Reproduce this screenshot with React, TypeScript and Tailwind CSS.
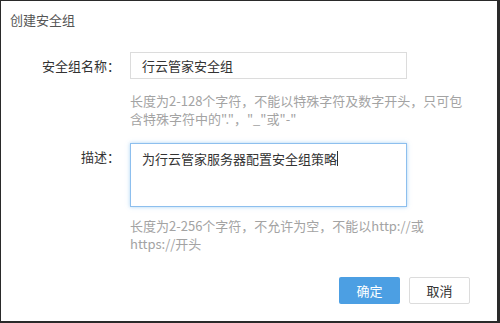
import React from "react";

// ── Create security group dialog ──────────────────────────────
const font = "font-['Noto_Sans_CJK_SC','Liberation_Sans',sans-serif]";

const App: React.FC = () => {
  return (
    <div className={`w-[500px] h-[323px] bg-white border-t border-l border-r-[3px] border-b-2 border-[#2a2a2a] overflow-hidden ${font}`}>
      {/* title */}
      <div className="h-[37px] flex items-center pl-[9px] text-[13px] text-[#555]">
        创建安全组
      </div>

      <div className="grid grid-cols-[119px_277px] gap-x-[10px]">
        {/* name row */}
        <div className="mt-[14px] h-[27px] flex items-center justify-end text-[13px] text-[#333]">
          安全组名称：
        </div>
        <div className="mt-[14px] h-[27px] border border-[#dcdcdc] flex items-center pl-[11px] text-[13px] text-[#333]">
          行云管家安全组
        </div>

        <div />
        <p className="mt-[13px] w-[345px] text-[13px] leading-[18px] text-[#a3a3a3]">
          长度为2-128个字符，不能以特殊字符及数字开头，只可包含特殊字符中的"."，"_"或"-"
        </p>

        {/* description row */}
        <div className="mt-[15px] pt-[4px] h-[64px] flex justify-end text-[13px] leading-[20px] text-[#333]">
          描述：
        </div>
        <div className="mt-[15px] h-[64px] border border-[#8dbfee] shadow-[0_0_4px_rgba(102,175,233,0.55)] pl-[11px] pt-[5px] text-[13px] leading-[20px] text-[#333]">
          为行云管家服务器配置安全组策略
          <span className="inline-block w-px h-[15px] bg-[#333] align-[-2px]" />
        </div>

        <div />
        <p className="mt-[10px] w-[345px] text-[13px] leading-[18px] text-[#a3a3a3]">
          长度为2-256个字符，不允许为空，不能以http://或<br />https://开头
        </p>
      </div>

      {/* actions */}
      <div className="mt-[24px] flex justify-end gap-[9px] pr-[27px]">
        <button className="w-[61px] h-[27px] rounded-[2px] bg-[#4c9fe3] text-white text-[13px]">
          确定
        </button>
        <button className="w-[61px] h-[27px] rounded-[2px] bg-white border border-[#dcdcdc] text-[#333] text-[13px]">
          取消
        </button>
      </div>
    </div>
  );
};

export default App;
